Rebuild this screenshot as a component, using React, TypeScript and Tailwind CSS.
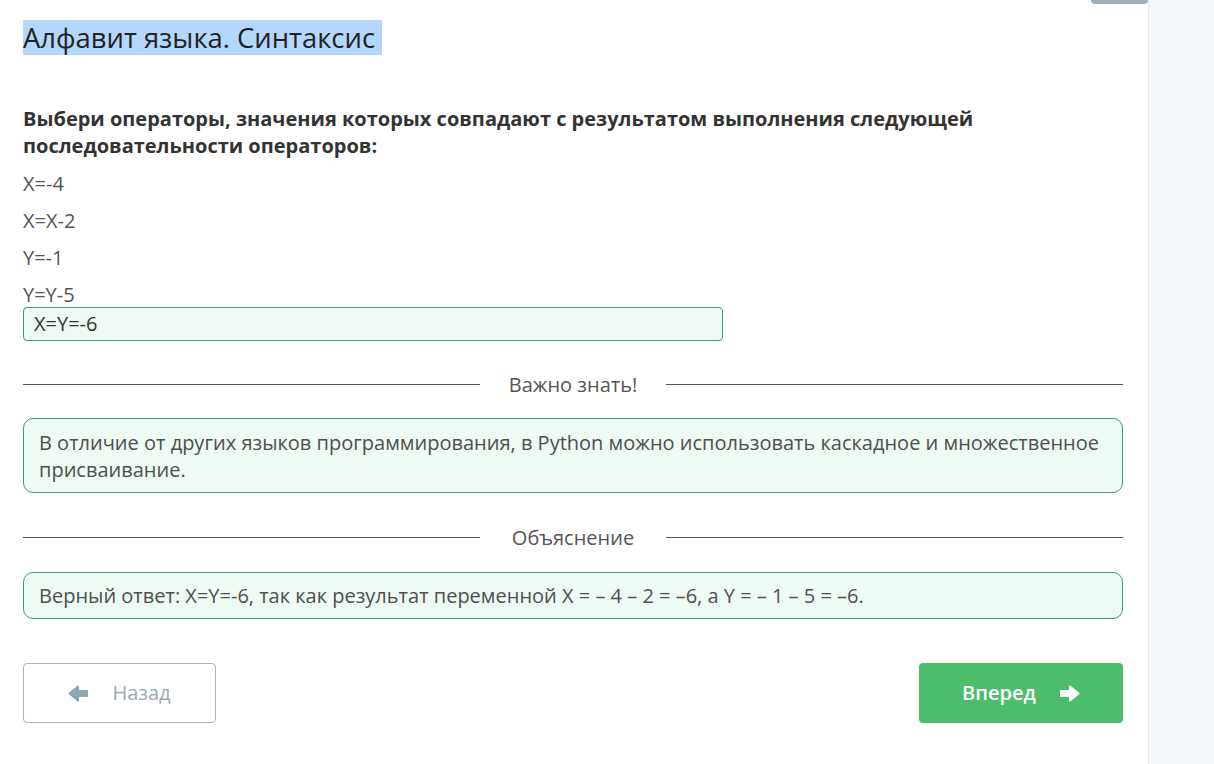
const lines = ['X=-4', 'X=X-2', 'Y=-1', 'Y=Y-5'];

function Arrow({ dir, className }: { dir: 'left' | 'right'; className?: string }) {
  return (
    <svg width="20" height="17" viewBox="0 0 20 17" className={className}>
      <polygon
        points="1,6 10,6 10,1.5 18.5,8.5 10,15.5 10,11 1,11"
        fill="currentColor"
        stroke="currentColor"
        strokeWidth="2"
        strokeLinejoin="round"
        transform={dir === 'left' ? 'translate(20,0) scale(-1,1)' : undefined}
      />
    </svg>
  );
}

function Divider({ label }: { label: string }) {
  return (
    <div className="flex items-center">
      <div className="flex-1 h-px bg-[#555]" />
      <div className="w-[186px] text-center text-[20px] leading-[27px] text-[#555]">{label}</div>
      <div className="flex-1 h-px bg-[#555]" />
    </div>
  );
}

export default function App() {
  return (
    <div className="w-[1214px] h-[764px] flex bg-white overflow-hidden" style={{ fontFamily: '"Open Sans", "Noto Sans", sans-serif' }}>
      <main className="w-[1148px] pl-[23px] pr-[25px] relative">
        <div className="absolute right-0 top-0 w-[57px] h-[4px] bg-[#9fb0bd] rounded-b-md" />
        <h1 className="mt-[20px] text-[27.4px] leading-[35px] text-[#222] inline-block bg-[#b3d7fd] pr-[7px]">
          Алфавит языка. Синтаксис
        </h1>

        <p className="mt-[50px] text-[20px] leading-[27px] font-bold text-[#333] w-[1000px]">
          Выбери операторы, значения которых совпадают с результатом выполнения следующей последовательности операторов:
        </p>

        <div className="mt-[12px] flex flex-col gap-[12px] text-[20px] leading-[25px] text-[#555]">
          {lines.map(l => (
            <div key={l}>{l}</div>
          ))}
        </div>

        <div className="w-[700px] h-[34px] border border-[#3a9a86] bg-[#edf9f2] rounded-[4px] px-[10px] text-[20px] leading-[32px] text-[#333]">
          X=Y=-6
        </div>

        <div className="mt-[30px]">
          <Divider label="Важно знать!" />
        </div>

        <div className="mt-[20px] border border-[#3a9a86] bg-[#eefaf4] rounded-[10px] px-[15px] pt-[10px] pb-[9px] text-[20px] leading-[27px] text-[#4f4f4f]">
          В отличие от других языков программирования, в Python можно использовать каскадное и множественное присваивание.
        </div>

        <div className="mt-[31px]">
          <Divider label="Объяснение" />
        </div>

        <div className="mt-[21px] border border-[#3a9a86] bg-[#eefaf4] rounded-[10px] px-[15px] py-[9px] text-[20px] leading-[27px] text-[#4f4f4f]">
          Верный ответ: X=Y=-6, так как результат переменной X = – 4 – 2 = –6, а Y = – 1 – 5 = –6.
        </div>

        <div className="mt-[44px] flex justify-between">
          <button className="w-[193px] h-[60px] border border-[#aab3ba] rounded-[4px] flex items-center justify-center gap-[24px] text-[20px] text-[#9aabb5]">
            <Arrow dir="left" className="text-[#8ea7b6]" />
            Назад
          </button>
          <button className="w-[204px] h-[60px] bg-[#4cbe6b] rounded-[4px] flex items-center justify-center gap-[24px] text-[20px] text-white font-semibold">
            Вперед
            <Arrow dir="right" />
          </button>
        </div>
      </main>
      <aside className="flex-1 bg-[#f5f8fb] border-l border-[#e6eaee]" />
    </div>
  );
}
